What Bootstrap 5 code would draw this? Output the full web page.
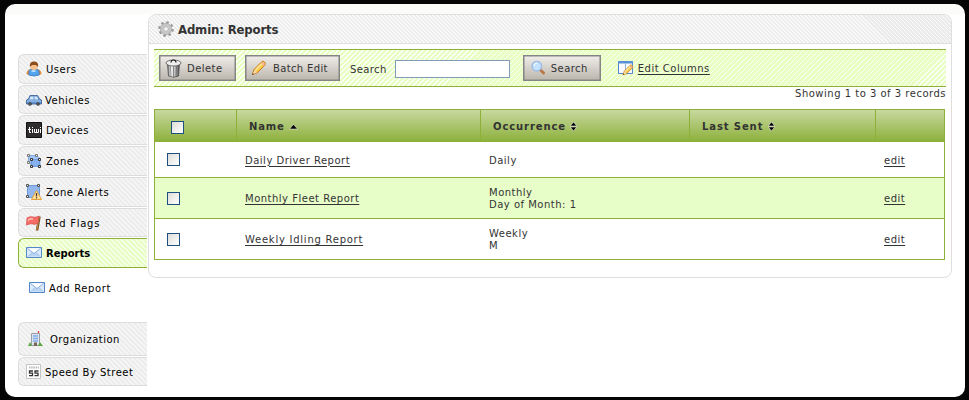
<!DOCTYPE html>
<html lang="en">
<head>
<meta charset="utf-8">
<title>Admin: Reports</title>
<link href="https://cdn.jsdelivr.net/npm/bootstrap@5.3.0/dist/css/bootstrap.min.css" rel="stylesheet">
<style>
body{background:#050505;font-family:"DejaVu Sans",Verdana,sans-serif;font-size:10px;line-height:12px;color:#333;letter-spacing:.5px;height:400px;overflow:hidden;padding:4px 4px 3px 5px}
.shell{height:393px;border-radius:10px;background:linear-gradient(#fbfbf9 0 10px,#fff 10px);padding:10px 13px 0}
.side{width:129px;padding-top:40px}
.hatch{background:repeating-linear-gradient(45deg,#ededed 0 2.54px,#f6f6f6 2.54px 3.54px)}
.tab{height:30px;border:1px solid #dcdcdc;border-right:0;border-radius:6px 0 0 6px;color:#000;padding:2px 0 0 7px;margin-bottom:1px;text-decoration:none;white-space:nowrap}
.tab svg,.sub svg{margin:-2px 4px 0 0;flex-shrink:0}
.tab.short{height:29px}
.tab.short svg{margin-right:3px}
.tab.on{height:30px;border-color:#8cb038;background:repeating-linear-gradient(45deg,#e8fec6 0 2.54px,#f6ffe8 2.54px 3.54px);font-weight:bold;letter-spacing:0;margin-bottom:0}
.sub{height:54px;padding:2px 0 14px 11px;color:#000;text-decoration:none;letter-spacing:.65px}
.sub svg{margin-top:-3px}
.tab.on svg{margin-top:-3px}
.tab.org{height:34px;padding-left:9px}
.tab.org svg{margin-right:6px}
.wide{letter-spacing:.75px}
.panel{width:804px;height:264px;border:1px solid #dedede;border-radius:8px;margin-left:1px;background:#fff;overflow:hidden}
.panel-title{height:28px;border-bottom:1px solid #dedede;padding-left:9px;font:bold 13px "DejaVu Sans Condensed","DejaVu Sans",sans-serif;letter-spacing:-.15px;box-sizing:content-box;background:repeating-linear-gradient(45deg,#ebebeb 0 1.83px,#fafafa 1.83px 2.83px)}
.tools{height:38px;margin:5px 5px 0;border:solid #8cb038;border-width:1px 0;background:repeating-linear-gradient(135deg,#e8fec2 0 2.54px,#fcfff8 2.54px 3.54px);padding-left:5px}
.tool{height:26px;border:1px solid #858585;border-radius:0;background:linear-gradient(#efedea,#d5d1cb 50%,#bcb7ad);color:#333;font-size:10px;line-height:12px;padding:2px 0 0 5px;box-shadow:inset 0 0 0 .5px #858585;letter-spacing:.45px}
.tool svg{margin:-2px 6px 0 0}
.tool-del{width:77px}
.tool-del svg{margin-right:5px}
.tool-batch{width:95px;margin-left:9px;letter-spacing:.35px}
.tool-find{width:78px;padding-left:7px}
.cap{margin:3px 0 0 10px;letter-spacing:.4px}
.query{width:115px;height:18px;border:1px solid #7f9db9;background:#fff;margin:1px 13px 0 8px;padding:0 3px}
.cols-icon{margin:0 4px 0 17px}
.lnk{color:#333;text-decoration:underline;text-underline-offset:2px}
.tools .lnk{margin-top:2px}
.count{height:22px;padding:1px 5px 0 0;letter-spacing:.5px}
.grid{width:791px;margin-left:5px;table-layout:fixed;border:1px solid #8cb038;border-collapse:separate;border-spacing:0}
.grid th{height:32px;border-right:1px solid #8cb038;border-bottom:1px solid #8cb038;padding:2px 0 0 12px;letter-spacing:.9px}
.grid th.nm{letter-spacing:.8px}
.grid thead{background:linear-gradient(#c7d89f,#8cb03a)}
.grid th:last-child{border-right:0}
.grid td{height:41px;border-bottom:1px solid #8cb038;padding:2px 0 0 8px}
.grid tr.first td{height:36px}
.grid tr.alt td{background:#e8fec9}
.grid tr.last td{height:40px;border-bottom:0}
.box{display:block;appearance:none;width:13px;height:13px;border:1px solid #1d5080;margin:0 0 2px 4px;background:linear-gradient(135deg,#dcdcd7,#fff)}
th .box{margin:1px 0 0 4px}
</style>
<script src="https://cdn.jsdelivr.net/npm/bootstrap@5.3.0/dist/js/bootstrap.bundle.min.js"></script>
</head>
<body>
<svg width="0" height="0" class="position-absolute">
<defs>
<linearGradient id="can"><stop stop-color="#666"/><stop offset=".3" stop-color="#fff"/><stop offset=".7" stop-color="#aaa"/><stop offset="1" stop-color="#444"/></linearGradient>
<symbol id="mail" viewBox="0 0 16 11"><path fill="#dcebfc" stroke="#5287c8" d="M.5.5h15v10H.5z"/><path fill="#b9d3f3" d="M2 9.500 6 5.500h4l4 4z"/><path fill="#fff" stroke="#82aae0" d="m1.500 1.500 6.500 5 6.500-5"/><path fill="none" stroke="#9dbde8" d="m2 9.500 4-4m8 4-4-4"/></symbol>
<symbol id="pencil" viewBox="0 0 16 16"><path fill="#fbc94c" stroke="#c97a23" d="m1.500 14.500 1.500-5 8-8q1-1 2.500.5t.5 3l-8 8z"/><path stroke="#ffeaa0" stroke-width="1.500" d="m4.500 10 6.500-6.500"/><path fill="#f3dcb9" d="m2 14 1.500-4 2.500 2.500z"/><path fill="#664020" d="m1 15 .7-2 1.300 1.300z"/><path stroke="#efb29a" stroke-width="2" d="m11 2.500 2.500 2.500"/></symbol>
<symbol id="sort" viewBox="0 0 7 9"><path fill="#000" stroke="#fff" stroke-width=".5" d="m3.500 0 3.200 4H.3zM.3 5h6.400L3.500 9z"/></symbol>
</defs>
</svg>
<div class="shell d-flex align-items-start">
<nav class="side d-flex flex-column flex-shrink-0">
<a class="tab hatch d-flex align-items-center"><svg width="16" height="16"><path fill="#e58f3a" d="M.5 13q0-4 4-5h7q4 1 4 5l-2 1h-11z"/><path fill="#55a5ed" stroke="#2f75c8" stroke-width=".8" d="M3 14q-1-6 3-6h4q4 0 3 6-5 2-10 0z"/><path fill="#b4dcff" d="M5 10q3-2 5 0l-1 1H6z"/><rect x="4.500" y="1" width="7" height="8" rx="3.200" fill="#f5c08c"/><path fill="#8c4c1b" d="M4 6Q3 .5 8 .5T12 6l-2-2H6z"/></svg>Users</a>
<a class="tab hatch short d-flex align-items-center"><svg width="16" height="16"><path fill="#6795d1" stroke="#365a91" stroke-width=".8" d="M.5 12V8l2-1L4 3.500h7.500L13.500 7l2 1v4z"/><path fill="#d3e7fb" d="M4.500 4.500h3v3H3.300zm4 0h2.500l1.500 3h-4z"/><path stroke="#a7c8ef" d="M1 9h14"/><circle cx="4" cy="12" r="1.800" fill="#333"/><circle cx="12" cy="12" r="1.800" fill="#333"/><path fill="#bbb" d="M3.500 11.500h1v1h-1zm8 0h1v1h-1z"/></svg>Vehicles</a>
<a class="tab hatch d-flex align-items-center"><svg width="16" height="16"><path fill="#2f2d2e" stroke="#111" d="M.5.500h15v15H.5z"/><path fill="none" stroke="#fff" d="M3.500 5v5.500H5M2 7.500h3M6.500 7v4m0-6v1M8.500 7v3.500h4V7m-2 0v3m4-3v4m0-6v1"/></svg>Devices</a>
<a class="tab hatch d-flex align-items-center"><svg width="16" height="16"><path fill="#a5c7f5" stroke="#7fa9e2" d="M2.500 2.500h8l3.500 3v7.500H6l-3.500-5z"/><path fill="#86b0ee" stroke="#6c9be0" d="M5.500 6.500h8v7h-8z"/><g fill="#eee" stroke="#777"><path d="M1.500 1.500h2v2h-2zM9.500 1.500h2v2h-2zM1.500 8.500h2v2h-2z"/><path stroke="#333" d="M4.500 5.500h2v2h-2zM12.500 5.500h2v2h-2zM4.500 12.500h2v2h-2zM12.500 12.500h2v2h-2z"/></g></svg>Zones</a>
<a class="tab hatch d-flex align-items-center"><svg width="16" height="16"><path fill="#93b7ec" stroke="#6c99d8" d="M1.500 1.500h12v12h-12z"/><g fill="#ddd" stroke="#555"><path d="M.5.5h2v2h-2zM11.500.5h2v2h-2zM.5 11.500h2v2h-2z"/></g><path fill="#ffe49a" stroke="#e5a23b" d="m10.500 6.500 5 9h-10z"/><path stroke="#533" stroke-width="1.300" d="M10.500 9v3.500m0 .7v1.300"/></svg>Zone Alerts</a>
<a class="tab hatch short d-flex align-items-center"><svg width="16" height="16"><path stroke="#795022" stroke-width="2.500" d="m13.500 1.500-2.500 14"/><path stroke="#c79355" d="m13.200 1.500-2.500 14"/><path fill="#f66b65" stroke="#d9514b" stroke-width=".8" d="M1 3q3-2 6-1t6-1l-1 7q-3 2-5 1T.5 10z"/><path fill="#ffb0aa" d="M2 4q3-2 5-1v2q-3-1-5.500 2z"/></svg><span class="wide">Red Flags</span></a>
<a class="tab on d-flex align-items-center"><svg width="16" height="11"><use href="#mail"/></svg>Reports</a>
<a class="sub d-flex align-items-center"><svg width="16" height="11"><use href="#mail"/></svg>Add Report</a>
<a class="tab hatch org d-flex align-items-center"><svg width="16" height="16"><path fill="#dce3ec" stroke="#999fa9" d="M3.500 2.500h8v12h-8z"/><path stroke="#7facec" stroke-width="1.300" d="M5 5h5M5 7.500h5M5 10h5"/><path fill="#765" d="M6 11.500h3V15H6z"/><path stroke="#e03b32" stroke-width="1.300" d="M10.500 0v2"/><path fill="#5aa53e" d="m0 15 2-4 2 4zm10 0 2-4 3 4z"/></svg>Organization</a>
<a class="tab hatch short d-flex align-items-center"><svg width="16" height="16"><path fill="#fff" stroke="#c4c4c4" d="M.5.5h14v14H.5z"/><path stroke="#bbb" stroke-dasharray="1.500 .7" stroke-width="2" d="M3 3.500h10"/><path fill="none" stroke="#333" stroke-width="1.300" d="M7 7H3.500v2.200h3v2.500H3M12.500 7H9v2.200h3v2.500H8.500"/></svg>Speed By Street</a>
</nav>
<main class="panel flex-shrink-0">
<div class="panel-title d-flex align-items-center"><svg width="16" height="16" class="me-1"><circle cx="8" cy="8" r="6.600" fill="none" stroke="#999" stroke-width="2.400" stroke-dasharray="2.600 2.580"/><circle cx="8" cy="8" r="4.300" fill="none" stroke="#c6c6c6" stroke-width="3"/><circle cx="8" cy="8" r="5.700" fill="none" stroke="#999" stroke-width=".5"/><circle cx="8" cy="8" r="2.400" fill="#f3f3f3" stroke="#999" stroke-width=".7"/></svg>Admin: Reports</div>
<div class="tools d-flex align-items-center">
<button class="btn tool tool-del d-flex align-items-center"><svg width="17" height="19"><path fill="url(#can)" stroke="#444" stroke-width=".7" d="M2.500 5h12l-1 12q-5 2.500-10 0z"/><path stroke="#666" stroke-width=".7" d="m5.500 7 .5 10M8.500 7v11m3-11-.5 10"/><ellipse cx="8.500" cy="4" rx="7.500" ry="3" fill="#eee" stroke="#555" stroke-width=".8"/><path fill="none" stroke="#222" stroke-width="1.200" d="M6 3.500q0-2.500 2.500-2.500T11 3.500"/></svg>Delete</button>
<button class="btn tool tool-batch d-flex align-items-center"><svg width="16" height="16"><use href="#pencil"/></svg>Batch Edit</button>
<label for="q" class="cap">Search</label><input id="q" class="query">
<button class="btn tool tool-find d-flex align-items-center"><svg width="14" height="16"><path stroke="#b87a4a" stroke-width="3" stroke-linecap="round" d="m9.500 10 3 3"/><circle cx="5.800" cy="6.200" r="4.700" fill="#c3e2ff" stroke="#9dbbe5" stroke-width="1.500"/><path fill="none" stroke="#fff" d="M3 6q0-3 3-3"/></svg>Search</button>
<svg width="16" height="16" class="cols-icon"><path fill="#f7faff" stroke="#5288cf" d="M.5 1.500h14v12H.5z"/><path fill="#5a90d6" d="M0 1h15v2.500H0z"/><path stroke="#8eb1df" d="M7.500 3v10"/><svg x="4" y="4" width="12" height="12"><use href="#pencil"/></svg></svg><a class="lnk">Edit Columns</a>
</div>
<div class="count text-end">Showing 1 to 3 of 3 records</div>
<table class="grid">
<colgroup><col style="width:82px"><col style="width:244px"><col style="width:209px"><col style="width:186px"><col style="width:68px"></colgroup>
<thead><tr><th><input type="checkbox" class="box"></th><th class="nm">Name <svg width="9" height="6"><path fill="#000" stroke="#fff" stroke-width=".5" d="m4.500.5 4 4.500h-8z"/></svg></th><th>Occurrence <svg width="7" height="9" class="align-middle"><use href="#sort"/></svg></th><th>Last Sent <svg width="7" height="9" class="align-middle"><use href="#sort"/></svg></th><th></th></tr></thead>
<tbody>
<tr class="first"><td><input type="checkbox" class="box"></td><td><a class="lnk">Daily Driver Report</a></td><td>Daily</td><td></td><td><a class="lnk">edit</a></td></tr>
<tr class="alt"><td><input type="checkbox" class="box"></td><td><a class="lnk">Monthly Fleet Report</a></td><td>Monthly<br>Day of Month: 1</td><td></td><td><a class="lnk">edit</a></td></tr>
<tr class="last"><td><input type="checkbox" class="box"></td><td><a class="lnk wide">Weekly Idling Report</a></td><td>Weekly<br>M</td><td></td><td><a class="lnk">edit</a></td></tr>
</tbody>
</table>
</main>
</div>
</body>
</html>
